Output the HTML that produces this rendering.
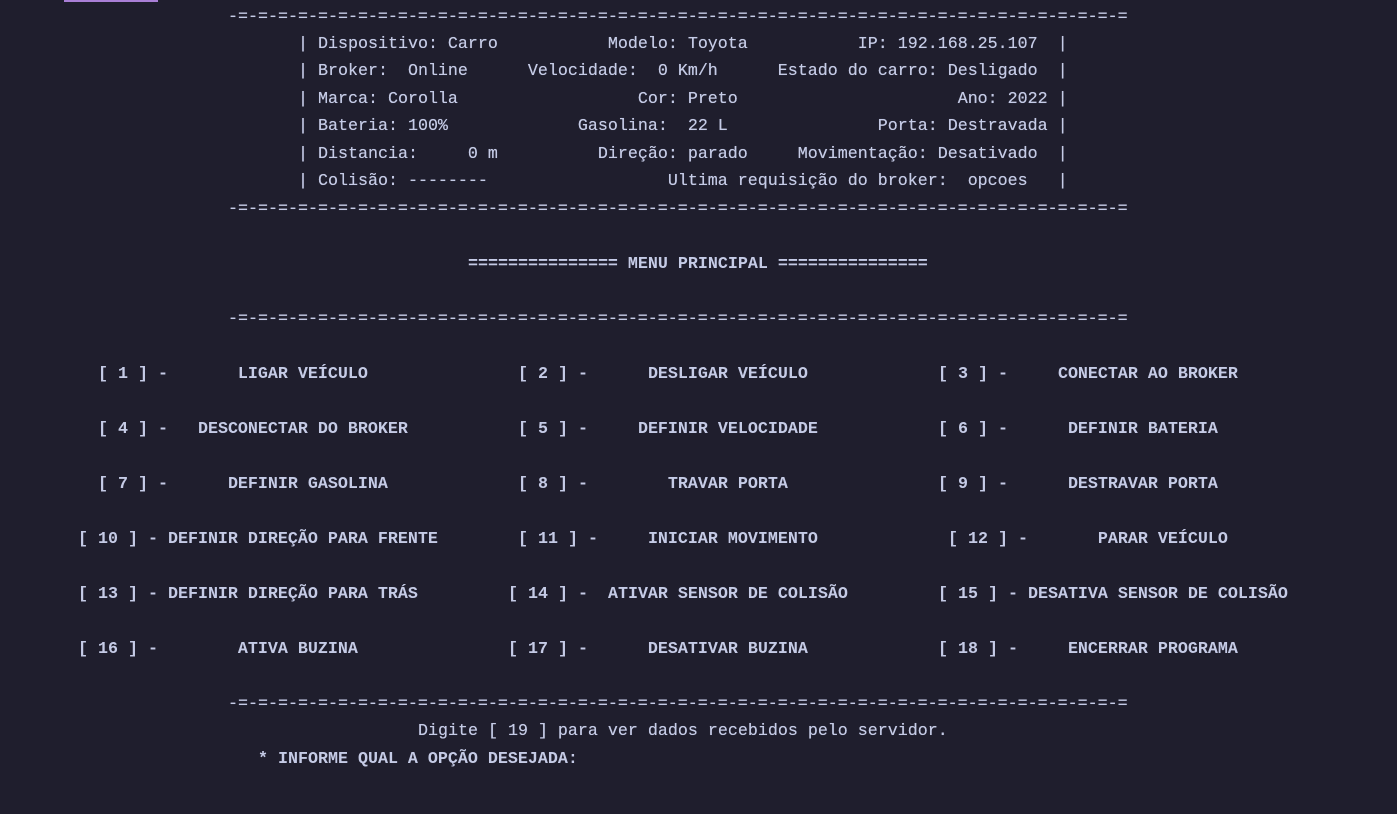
<!DOCTYPE html>
<html><head><meta charset="utf-8"><style>
html,body{margin:0;padding:0;}
body{width:1397px;height:814px;background:#1f1e2d;position:relative;overflow:hidden;
font-family:"Liberation Mono","DejaVu Sans Mono",monospace;font-size:16.67px;color:#c5cbe6;}
.t{position:absolute;white-space:pre;line-height:20px;margin-top:2px;text-shadow:0 0 0.4px #c5cbe6;}
.b{font-weight:bold;text-shadow:none;}
#bar{position:absolute;left:64px;top:0;width:94px;height:2px;background:#a97fd6;}
</style></head><body>
<div id="bar"></div>
<div class="t" style="left:228px;top:6px">-=-=-=-=-=-=-=-=-=-=-=-=-=-=-=-=-=-=-=-=-=-=-=-=-=-=-=-=-=-=-=-=-=-=-=-=-=-=-=-=-=-=-=-=-=</div>
<div class="t" style="left:298px;top:33px">| Dispositivo: Carro           Modelo: Toyota           IP: 192.168.25.107  |</div>
<div class="t" style="left:298px;top:60px">| Broker:  Online      Velocidade:  0 Km/h      Estado do carro: Desligado  |</div>
<div class="t" style="left:298px;top:88px">| Marca: Corolla                  Cor: Preto                      Ano: 2022 |</div>
<div class="t" style="left:298px;top:115px">| Bateria: 100%             Gasolina:  22 L               Porta: Destravada |</div>
<div class="t" style="left:298px;top:143px">| Distancia:     0 m          Direção: parado     Movimentação: Desativado  |</div>
<div class="t" style="left:298px;top:170px">| Colisão: --------                  Ultima requisição do broker:  opcoes   |</div>
<div class="t" style="left:228px;top:198px">-=-=-=-=-=-=-=-=-=-=-=-=-=-=-=-=-=-=-=-=-=-=-=-=-=-=-=-=-=-=-=-=-=-=-=-=-=-=-=-=-=-=-=-=-=</div>
<div class="t b" style="left:468px;top:253px">=============== MENU PRINCIPAL ===============</div>
<div class="t" style="left:228px;top:308px">-=-=-=-=-=-=-=-=-=-=-=-=-=-=-=-=-=-=-=-=-=-=-=-=-=-=-=-=-=-=-=-=-=-=-=-=-=-=-=-=-=-=-=-=-=</div>

<div class="t b" style="left:98px;top:363px">[ 1 ] -       LIGAR VEÍCULO</div>
<div class="t b" style="left:518px;top:363px">[ 2 ] -      DESLIGAR VEÍCULO</div>
<div class="t b" style="left:938px;top:363px">[ 3 ] -     CONECTAR AO BROKER</div>

<div class="t b" style="left:98px;top:418px">[ 4 ] -   DESCONECTAR DO BROKER</div>
<div class="t b" style="left:518px;top:418px">[ 5 ] -     DEFINIR VELOCIDADE</div>
<div class="t b" style="left:938px;top:418px">[ 6 ] -      DEFINIR BATERIA</div>

<div class="t b" style="left:98px;top:473px">[ 7 ] -      DEFINIR GASOLINA</div>
<div class="t b" style="left:518px;top:473px">[ 8 ] -        TRAVAR PORTA</div>
<div class="t b" style="left:938px;top:473px">[ 9 ] -      DESTRAVAR PORTA</div>

<div class="t b" style="left:78px;top:528px">[ 10 ] - DEFINIR DIREÇÃO PARA FRENTE</div>
<div class="t b" style="left:518px;top:528px">[ 11 ] -     INICIAR MOVIMENTO</div>
<div class="t b" style="left:948px;top:528px">[ 12 ] -       PARAR VEÍCULO</div>

<div class="t b" style="left:78px;top:583px">[ 13 ] - DEFINIR DIREÇÃO PARA TRÁS</div>
<div class="t b" style="left:508px;top:583px">[ 14 ] -  ATIVAR SENSOR DE COLISÃO</div>
<div class="t b" style="left:938px;top:583px">[ 15 ] - DESATIVA SENSOR DE COLISÃO</div>

<div class="t b" style="left:78px;top:638px">[ 16 ] -        ATIVA BUZINA</div>
<div class="t b" style="left:508px;top:638px">[ 17 ] -      DESATIVAR BUZINA</div>
<div class="t b" style="left:938px;top:638px">[ 18 ] -     ENCERRAR PROGRAMA</div>

<div class="t" style="left:228px;top:693px">-=-=-=-=-=-=-=-=-=-=-=-=-=-=-=-=-=-=-=-=-=-=-=-=-=-=-=-=-=-=-=-=-=-=-=-=-=-=-=-=-=-=-=-=-=</div>
<div class="t" style="left:418px;top:720px">Digite [ 19 ] para ver dados recebidos pelo servidor.</div>
<div class="t b" style="left:258px;top:748px">* INFORME QUAL A OPÇÃO DESEJADA:</div>
</body></html>
